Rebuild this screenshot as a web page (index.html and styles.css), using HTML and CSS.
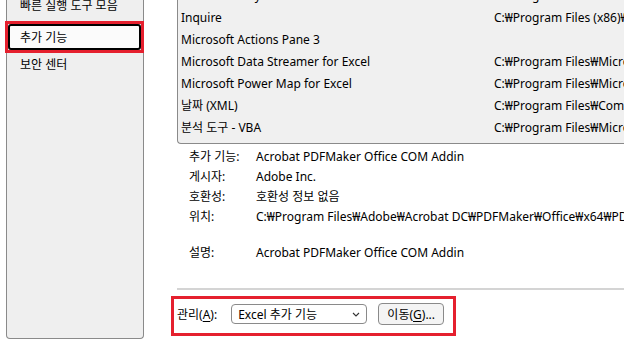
FILE: index.html
```html
<!DOCTYPE html>
<html lang="ko">
<head>
  <meta charset="UTF-8">
  <title>Excel 옵션 - 추가 기능</title>
  <link rel="stylesheet" href="styles.css">
</head>
<body>
  <div class="window">
    <aside class="nav">
      <div class="nav-item">빠른 실행 도구 모음</div>
      <div class="nav-frame">
        <div class="nav-item selected">추가 기능</div>
      </div>
      <div class="nav-item">보안 센터</div>
    </aside>

    <main class="content">
      <div class="addin-list">
        <div class="addin-row"><span class="name">Euro Currency Tools</span><span class="path">C:₩Program Files₩Microsoft Office₩root₩Office16₩Library</span></div>
        <div class="addin-row"><span class="name">Inquire</span><span class="path">C:₩Program Files (x86)₩Microsoft Office₩Office16</span></div>
        <div class="addin-row"><span class="name">Microsoft Actions Pane 3</span><span class="path"></span></div>
        <div class="addin-row"><span class="name">Microsoft Data Streamer for Excel</span><span class="path">C:₩Program Files₩Microsoft Office₩root</span></div>
        <div class="addin-row"><span class="name">Microsoft Power Map for Excel</span><span class="path">C:₩Program Files₩Microsoft Office₩root</span></div>
        <div class="addin-row"><span class="name">날짜 (XML)</span><span class="path">C:₩Program Files₩Common Files₩Microsoft Shared</span></div>
        <div class="addin-row"><span class="name">분석 도구 - VBA</span><span class="path">C:₩Program Files₩Microsoft Office₩root₩Office16</span></div>
      </div>

      <div class="details">
        <div>추가 기능:</div><div>Acrobat PDFMaker Office COM Addin</div>
        <div>게시자:</div><div>Adobe Inc.</div>
        <div>호환성:</div><div>호환성 정보 없음</div>
        <div>위치:</div><div>C:₩Program Files₩Adobe₩Acrobat DC₩PDFMaker₩Office₩x64₩PDFMOfficeAddin.dll</div>
        <div>설명:</div><div>Acrobat PDFMaker Office COM Addin</div>
      </div>

      <div class="separator"></div>

      <div class="manage">
        <span class="manage-label">관리(<u>A</u>):</span>
        <div class="select">
          <span>Excel 추가 기능</span>
          <svg width="8" height="5" viewBox="0 0 8 5"><path d="M1 1 L4 4 L7 1" fill="none" stroke="#333" stroke-width="1.1"/></svg>
        </div>
        <button class="go-btn">이동(<u>G</u>)...</button>
      </div>
    </main>
  </div>
</body>
</html>
```

FILE: styles.css
```css
* {
  margin: 0;
  padding: 0;
  box-sizing: border-box;
}

body {
  background: #fff;
  color: #000;
  font-family: "Noto Sans", "Noto Sans CJK KR", sans-serif;
  font-size: 12px;
  overflow: hidden;
  width: 624px;
  height: 360px;
}

.window {
  display: flex;
  align-items: flex-start;
  margin-top: -20px;
}

/* left navigation */
.nav {
  margin-left: 6px;
  width: 138px;
  height: 359px;
  padding-top: 12px;
  background: #efefef;
  border: 1px solid #8a8a8a;
  border-top: none;
  border-radius: 0 0 4px 4px;
  flex-shrink: 0;
}

.nav-item {
  height: 26px;
  margin: 0 2px 0 1px;
  padding-left: 12px;
  display: flex;
  align-items: center;
  white-space: nowrap;
}

.nav-frame {
  margin: 3px -1px -2px -2px;
  border: 3px solid #e5202e;
}

.nav-frame .nav-item {
  margin: 0;
  padding-left: 10px;
}

.nav-item.selected {
  background: #fbfbfb;
  border: 2px solid #000;
  border-radius: 3px;
}

/* right side */
.content {
  margin-left: 27px;
  flex: 1;
  min-width: 0;
}

.addin-list {
  margin-left: 6px;
  width: 480px;
  padding: 4px 0 5px;
  background: #f0f0f0;
  border: 1px solid #8a8a8a;
  border-top: none;
  border-right: none;
  border-radius: 0 0 0 4px;
}

.addin-row {
  height: 22px;
  display: flex;
  align-items: center;
  white-space: nowrap;
}

.addin-row .name {
  width: 316px;
  padding-left: 3px;
  flex-shrink: 0;
}

.details {
  margin-top: 3px;
  padding-left: 18px;
  display: grid;
  grid-template-columns: 67px 1fr;
  grid-template-rows: 20px 20px 20px 20px 36px;
  align-items: end;
  line-height: 20px;
  white-space: nowrap;
}

.separator {
  margin: 25px 0 0 6px;
  height: 2px;
  background: #d4d4d4;
}

.manage {
  margin-top: 6px;
  width: 285px;
  height: 40px;
  padding: 4px 0 8px 3px;
  border: 3px solid #e5202e;
  display: flex;
  align-items: center;
}

.manage u,
.go-btn u {
  text-underline-offset: 2px;
}

.select {
  margin-left: 14px;
  width: 136px;
  height: 20px;
  padding: 0 6px 0 6px;
  background: #fff;
  border: 1px solid #8a8a8a;
  border-radius: 4px;
  display: flex;
  align-items: center;
  justify-content: space-between;
}

.go-btn {
  margin-left: 11px;
  width: 66px;
  height: 22px;
  background: #f4f4f4;
  border: 1px solid #8a8a8a;
  border-radius: 4px;
  font: inherit;
  color: #000;
}
```
